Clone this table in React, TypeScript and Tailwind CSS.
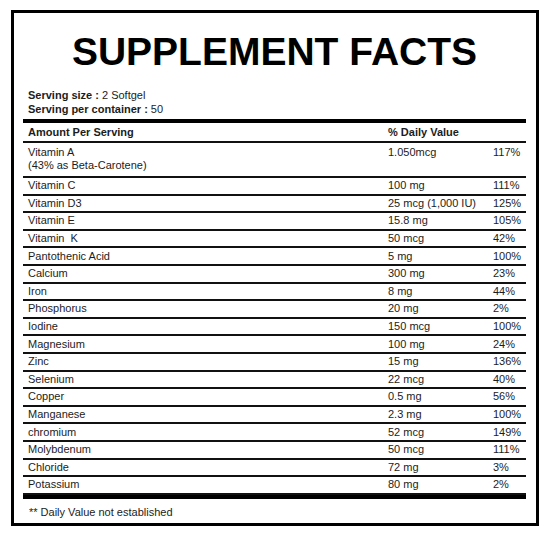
import React from "react";

const rows: [string, string, string][] = [
  ["Vitamin C", "100 mg", "111%"],
  ["Vitamin D3", "25 mcg (1,000 IU)", "125%"],
  ["Vitamin E", "15.8 mg", "105%"],
  ["Vitamin  K", "50 mcg", "42%"],
  ["Pantothenic Acid", "5 mg", "100%"],
  ["Calcium", "300 mg", "23%"],
  ["Iron", "8 mg", "44%"],
  ["Phosphorus", "20 mg", "2%"],
  ["Iodine", "150 mcg", "100%"],
  ["Magnesium", "100 mg", "24%"],
  ["Zinc", "15 mg", "136%"],
  ["Selenium", "22 mcg", "40%"],
  ["Copper", "0.5 mg", "56%"],
  ["Manganese", "2.3 mg", "100%"],
  ["chromium", "52 mcg", "149%"],
  ["Molybdenum", "50 mcg", "111%"],
  ["Chloride", "72 mg", "3%"],
  ["Potassium", "80 mg", "2%"],
];

export default function App() {
  return (
    <div
      className="w-[550px] h-[550px] bg-white pt-[10px] pl-[11px]"
      style={{ fontFamily: '"Liberation Sans", Arial, sans-serif' }}
    >
      <div className="w-[528px] h-[516px] border-[3px] border-black pl-[9px] pr-[10px] flex flex-col text-[#1c1c1c]">
        <h1 className="mt-[19px] text-center text-[39px] leading-[39px] font-bold text-black">
          SUPPLEMENT FACTS
        </h1>
        <div className="mt-[17px] pl-[5px] text-[11px] leading-[14px]">
          <div>
            <span className="font-bold">Serving size :</span> 2 Softgel
          </div>
          <div>
            <span className="font-bold">Serving per container :</span> 50
          </div>
        </div>
        <div className="mt-[3px] h-[4px] bg-black" />
        <div className="h-[20px] border-b-2 border-[#111] flex items-center pl-[5px] text-[11px] font-bold">
          <div className="w-[360px]">Amount Per Serving</div>
          <div>% Daily Value</div>
        </div>
        <div className="h-[35px] border-b-2 border-[#111] flex pl-[5px] pt-[3px] text-[11px] leading-[13px]">
          <div className="w-[360px]">
            <div>Vitamin A</div>
            <div>(43% as Beta-Carotene)</div>
          </div>
          <div className="w-[105px]">1.050mcg</div>
          <div>117%</div>
        </div>
        {rows.map(([name, amt, pct]) => (
          <div
            key={name}
            className="h-[17.6px] border-b-2 border-[#111] flex items-center pl-[5px] text-[11px] leading-[13px]"
          >
            <div className="w-[360px] whitespace-pre">{name}</div>
            <div className="w-[105px]">{amt}</div>
            <div>{pct}</div>
          </div>
        ))}
        <div className="h-[4px] bg-black" />
        <div className="pt-[6px] pl-[6px] text-[11px] leading-[14px]">
          ** Daily Value not established
        </div>
      </div>
    </div>
  );
}
